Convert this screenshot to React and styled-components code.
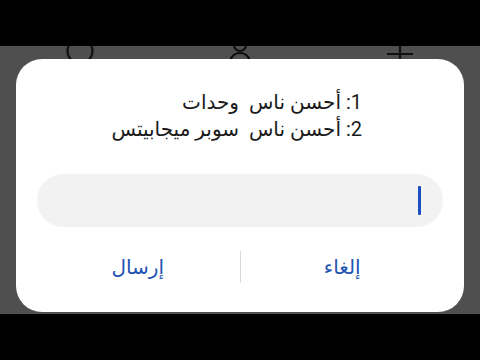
import React from 'react';
import styled, { createGlobalStyle } from 'styled-components';

const GlobalStyle = createGlobalStyle`
  html, body {
    margin: 0;
    padding: 0;
    background: #000;
  }
`;

const Screen = styled.div`
  display: flex;
  flex-direction: column;
  width: 480px;
  height: 360px;
  background: #000;
  font-family: "Roboto", "DejaVu Sans", sans-serif;
`;

const Bar = styled.div`
  height: ${p => p.h}px;
  background: #000;
  flex-shrink: 0;
`;

const Backdrop = styled.div`
  position: relative;
  flex: 1;
  overflow: hidden;
  background: #4f4f4f;
`;

const IconRow = styled.div`
  display: flex;
  justify-content: space-between;
  margin-top: -10px;
  padding: 0 66px;
`;

const Dialog = styled.div`
  position: absolute;
  top: 13px;
  left: 16px;
  right: 16px;
  bottom: 2px;
  display: flex;
  flex-direction: column;
  background: #fff;
  border-radius: 26px;
  direction: rtl;
`;

const Message = styled.div`
  padding: 30px 102px 0 20px;
  font-size: 20px;
  line-height: 27px;
  color: #1a1a1a;
`;

const Line = styled.div`
  white-space: pre;
`;

const Field = styled.div`
  display: flex;
  align-items: center;
  height: 53px;
  margin: 31px 21px 0;
  padding: 0 22px;
  background: #f2f2f2;
  border-radius: 27px;
`;

const Caret = styled.span`
  width: 3px;
  height: 29px;
  border-radius: 1px;
  background: #1a4fc4;
`;

const Actions = styled.div`
  display: flex;
  align-items: center;
  height: 52px;
  margin: 14px 20px 19px;
`;

const Action = styled.button`
  flex: 1;
  height: 100%;
  border: 0;
  background: none;
  padding: 0;
  font-family: inherit;
  font-size: 20px;
  color: #2354b3;
  cursor: pointer;
`;

const Divider = styled.div`
  width: 1px;
  height: 32px;
  background: #d9d9d9;
`;

const CircleIcon = () => (
  <svg width="28" height="30" viewBox="0 0 28 30" fill="none" stroke="#111" strokeWidth="2.2">
    <circle cx="14" cy="15" r="12.5" />
  </svg>
);

const PersonIcon = () => (
  <svg width="28" height="30" viewBox="0 0 28 30" fill="none" stroke="#111" strokeWidth="2.2">
    <circle cx="14" cy="9" r="6" />
    <path d="M4 27c0-6 4.5-10 10-10s10 4 10 10" />
  </svg>
);

const PlusIcon = () => (
  <svg width="28" height="30" viewBox="0 0 28 30" fill="none" stroke="#111" strokeWidth="2.2">
    <path d="M14 4v24M1 18h26" />
  </svg>
);

export default function App() {
  return (
    <>
      <GlobalStyle />
      <Screen>
        <Bar h={46} />
        <Backdrop>
          <IconRow>
            <CircleIcon />
            <PersonIcon />
            <PlusIcon />
          </IconRow>
          <Dialog>
            <Message>
              <Line>1: أحسن ناس  وحدات</Line>
              <Line>2: أحسن ناس  سوبر ميجابيتس</Line>
            </Message>
            <Field>
              <Caret />
            </Field>
            <Actions>
              <Action>إلغاء</Action>
              <Divider />
              <Action>إرسال</Action>
            </Actions>
          </Dialog>
        </Backdrop>
        <Bar h={46} />
      </Screen>
    </>
  );
}
